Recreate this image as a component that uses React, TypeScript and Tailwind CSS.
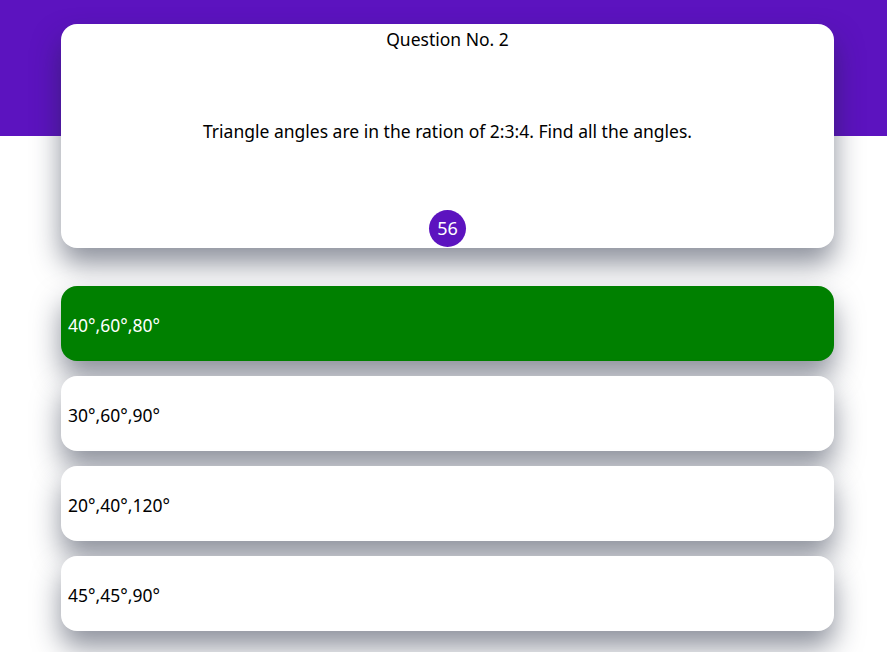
import React from "react";

const options = [
  { text: "40°,60°,80°", correct: true },
  { text: "30°,60°,90°", correct: false },
  { text: "20°,40°,120°", correct: false },
  { text: "45°,45°,90°", correct: false },
];

export default function App() {
  return (
    <div
      className="relative w-[887px] h-[652px] overflow-hidden bg-white text-black"
      style={{ fontFamily: '"Noto Sans", "Open Sans", sans-serif' }}
    >
      <div className="absolute left-0 top-0 w-full h-[136px] bg-[#5c13bf]" />
      <div className="relative flex flex-col px-[61px] pt-[24px] w-[895px]">
        <div className="flex flex-col items-center h-[224px] w-[773px] bg-white rounded-[16px] shadow-[0_16px_28px_rgba(30,38,60,0.5)]">
          <div className="text-[17.5px] leading-[30px]">Question No. 2</div>
          <div className="flex-1 flex items-center justify-center text-[17.5px] pb-[2px]">
            Triangle angles are in the ration of 2:3:4. Find all the angles.
          </div>
          <div className="w-[37px] h-[37px] mb-[1px] rounded-full bg-[#5c13bf] text-white text-[18px] flex items-center justify-center">
            56
          </div>
        </div>
        <div className="flex flex-col gap-[15px] mt-[38px] w-[773px]">
          {options.map((o) => (
            <div
              key={o.text}
              className={`h-[75px] rounded-[16px] flex items-center pl-[7px] pt-[3px] text-[17.5px] shadow-[0_16px_28px_rgba(30,38,60,0.5)] ${
                o.correct ? "bg-[#008000] text-white" : "bg-white text-black"
              }`}
            >
              {o.text}
            </div>
          ))}
        </div>
      </div>
    </div>
  );
}
